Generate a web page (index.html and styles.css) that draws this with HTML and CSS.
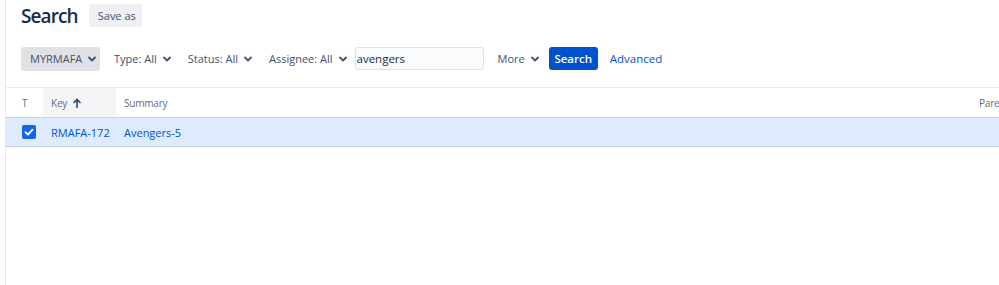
FILE: index.html
```html
<!DOCTYPE html>
<html lang="en">
<head>
<meta charset="utf-8">
<title>Search</title>
<link rel="stylesheet" href="styles.css">
</head>
<body>
<div class="page">
  <div class="title-row">
    <h1 class="title">Search</h1>
    <button class="btn btn-subtle-bg">Save as</button>
  </div>
  <div class="filters">
    <button class="btn btn-project">MYRMAFA <svg class="chev" viewBox="0 0 8 6"><path d="M1 1.5 L4 4.5 L7 1.5" /></svg></button>
    <button class="btn btn-plain">Type: All <svg class="chev" viewBox="0 0 8 6"><path d="M1 1.5 L4 4.5 L7 1.5" /></svg></button>
    <button class="btn btn-plain">Status: All <svg class="chev" viewBox="0 0 8 6"><path d="M1 1.5 L4 4.5 L7 1.5" /></svg></button>
    <button class="btn btn-plain">Assignee: All <svg class="chev" viewBox="0 0 8 6"><path d="M1 1.5 L4 4.5 L7 1.5" /></svg></button>
    <input class="text-input" type="text" value="avengers">
    <button class="btn btn-plain btn-more">More <svg class="chev" viewBox="0 0 8 6"><path d="M1 1.5 L4 4.5 L7 1.5" /></svg></button>
    <button class="btn btn-primary">Search</button>
    <a class="link" href="#">Advanced</a>
  </div>
  <div class="results">
    <div class="row head">
      <div class="cell c-type">T</div>
      <div class="cell c-key sorted">Key <svg class="sort" viewBox="0 0 8 10"><path d="M4 9.5 V1.5 M1 4.5 L4 1.3 L7 4.5" /></svg></div>
      <div class="cell c-summary">Summary</div>
      <div class="cell c-parent">Parent</div>
    </div>
    <div class="row item selected">
      <div class="cell c-type"><span class="checkbox"><svg viewBox="0 0 14 14"><path d="M3.5 7.2 L6 9.6 L10.5 4.6" /></svg></span></div>
      <div class="cell c-key"><a class="link" href="#">RMAFA-172</a></div>
      <div class="cell c-summary"><a class="link" href="#">Avengers-5</a></div>
      <div class="cell c-parent"></div>
    </div>
  </div>
</div>
</body>
</html>
```
FILE: styles.css
```css
* { box-sizing: border-box; }
html, body { margin: 0; padding: 0; background: #fff; overflow: hidden; }
body {
  font-family: "Open Sans", "Noto Sans", sans-serif;
  font-size: 11px;
  color: #42526e;
}
.page {
  margin-left: 5px;
  border-left: 1px solid #e6e7eb;
  height: 285px;
  width: 994px;
}
.title-row {
  display: flex;
  align-items: center;
  gap: 11px;
  padding: 4px 0 0 15px;
  height: 27px;
}
.title {
  margin: 0;
  font-size: 19px;
  font-weight: 600;
  color: #172b4d;
  letter-spacing: -0.9px;
  line-height: 24px;
}
.btn {
  font-family: inherit;
  font-size: 11px;
  border: 0;
  border-radius: 3px;
  height: 24px;
  display: inline-flex;
  align-items: center;
  gap: 6px;
  cursor: pointer;
  color: #42526e;
  background: transparent;
  white-space: nowrap;
}
.btn-subtle-bg {
  background: #eff0f3;
  padding: 0 9px;
  height: 23px;
  width: 53px;
}
.filters {
  display: flex;
  align-items: center;
  padding: 19px 0 0 15px;
  height: 44px;
}
.btn-project {
  background: #dfe1e6;
  padding: 0 6px 0 9px;
  width: 79px;
  justify-content: space-between;
  margin-right: 6px;
}
.btn-plain { padding: 0 8px; margin-right: 0; }
.btn-plain + .btn-plain { margin-left: 1px; }
.chev {
  flex-shrink: 0;
  width: 8px;
  height: 6px;
  fill: none;
  stroke: #42526e;
  stroke-width: 1.8;
  stroke-linecap: round;
  stroke-linejoin: round;
}
.text-input {
  font-family: inherit;
  font-size: 11.5px;
  color: #172b4d;
  width: 129px;
  height: 23px;
  border: 1px solid #dfe1e6;
  border-radius: 3px;
  background: #fafbfc;
  padding: 0 1px;
  margin-left: 0;
  outline: none;
}
.btn-more { margin-left: 6px; margin-right: 2px; }
.btn-primary {
  background: #0052cc;
  color: #fff;
  font-weight: 600;
  font-size: 11.5px;
  padding: 0 7px;
  width: 49px;
  height: 23px;
  justify-content: center;
}
.link {
  color: #0052cc;
  text-decoration: none;
}
.filters .link { margin-left: 12px; font-size: 11.5px; }
.results {
  margin-top: 16px;
  border-top: 1px solid #ebecf0;
}
.row {
  display: flex;
  height: 29px;
  align-items: stretch;
}
.cell {
  display: flex;
  align-items: center;
  padding: 0 8px;
  white-space: nowrap;
}
.head .cell { color: #5e6c84; font-size: 10px; letter-spacing: -0.2px; }
.c-type { width: 37px; padding-left: 16px; }
.c-key { width: 73px; }
.c-summary { flex: 1; }
.c-parent { width: 26px; overflow: hidden; padding: 0 0 0 6px; }
.sorted { background: #f4f5f7; gap: 6px; }
.sort {
  width: 8px;
  height: 10px;
  fill: none;
  stroke: #42526e;
  stroke-width: 1.7;
  stroke-linecap: round;
  stroke-linejoin: round;
}
.item { font-size: 11px; }
.selected {
  background: #deebff;
  border-top: 1px solid #c9d4e6;
  border-bottom: 1px solid #c9d4e6;
  height: 30px;
}
.checkbox {
  width: 14px;
  height: 14px;
  border-radius: 2px;
  background: #1467e6;
  display: inline-flex;
}
.checkbox svg {
  width: 14px;
  height: 14px;
  fill: none;
  stroke: #fff;
  stroke-width: 1.8;
  stroke-linecap: round;
  stroke-linejoin: round;
}
```
